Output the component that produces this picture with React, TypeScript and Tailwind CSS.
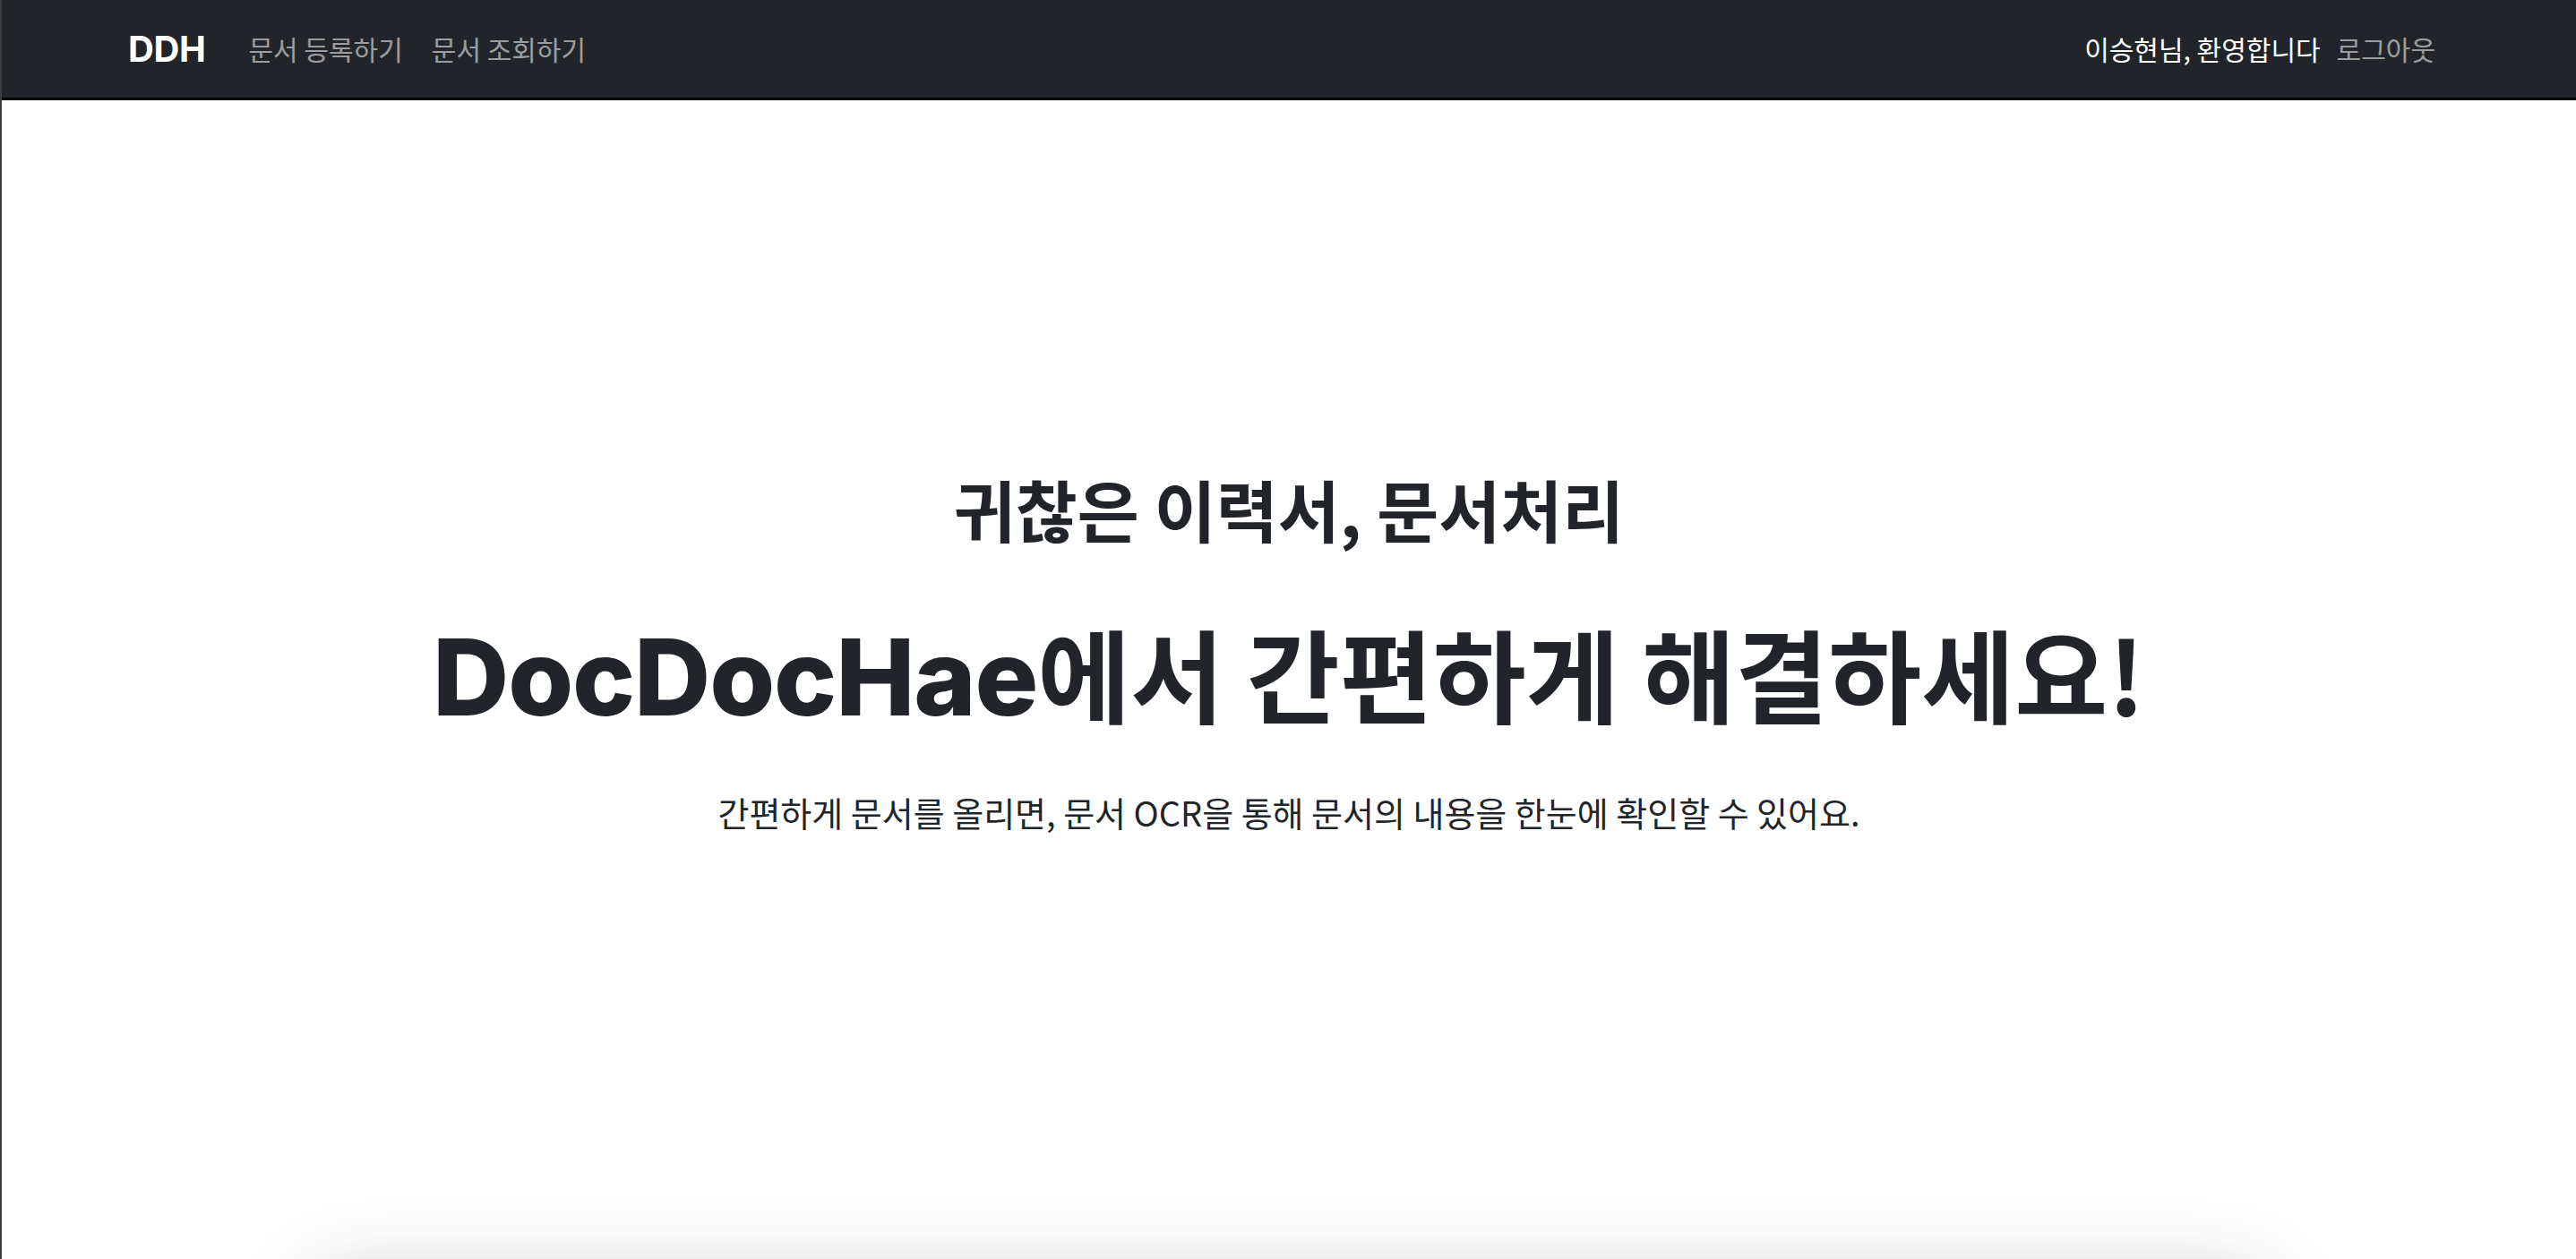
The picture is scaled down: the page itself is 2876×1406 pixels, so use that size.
import React from "react";

function NavBar() {
	return (
		<nav className="h-[112px] bg-[#212529] border-b-[3px] border-black flex items-center">
			<div className="mx-auto w-[2640px] px-[24px] flex items-center justify-between">
				<div className="flex items-center">
					<a href="#" className="mr-[32px] font-['Inter',sans-serif] text-[40px] font-bold tracking-[-0.01em] text-white">
						DDH
					</a>
					<a href="#" className="px-[16px] text-[30px] text-white/55">
						문서 등록하기
					</a>
					<a href="#" className="px-[16px] text-[30px] text-white/55">
						문서 조회하기
					</a>
				</div>
				<div className="flex items-center">
					<span className="text-[30px] text-white">이승현님, 환영합니다</span>
					<a href="#" className="ml-[2px] px-[16px] text-[30px] text-white/55">
						로그아웃
					</a>
				</div>
			</div>
		</nav>
	);
}

export default function App() {
	return (
		<div className="h-screen overflow-hidden bg-white border-l-2 border-[#3c3c3c] text-[#212529] font-['Noto_Sans_CJK_KR','Noto_Sans',sans-serif]">
			<NavBar />
			<main className="flex flex-col items-center pt-[411px]">
				<h2 className="text-[75px] font-bold leading-[1.2]">귀찮은 이력서, 문서처리</h2>
				<h1 className="mt-[70px] font-bold leading-[1.2] whitespace-nowrap">
					<span className="font-['Inter',sans-serif] text-[118px] font-extrabold tracking-[-0.01em]">DocDocHae</span>
					<span className="text-[113px]">에서 간편하게 해결하세요!</span>
				</h1>
				<p className="mt-[50px] text-[38px] leading-[1.5]">
					간편하게 문서를 올리면, 문서 OCR을 통해 문서의 내용을 한눈에 확인할 수 있어요.
				</p>
				<div className="mt-[472px] w-[2160px] h-[600px] shrink-0 rounded-[12px] bg-white shadow-[0_32px_96px_rgba(0,0,0,0.3)]" />
			</main>
		</div>
	);
}
